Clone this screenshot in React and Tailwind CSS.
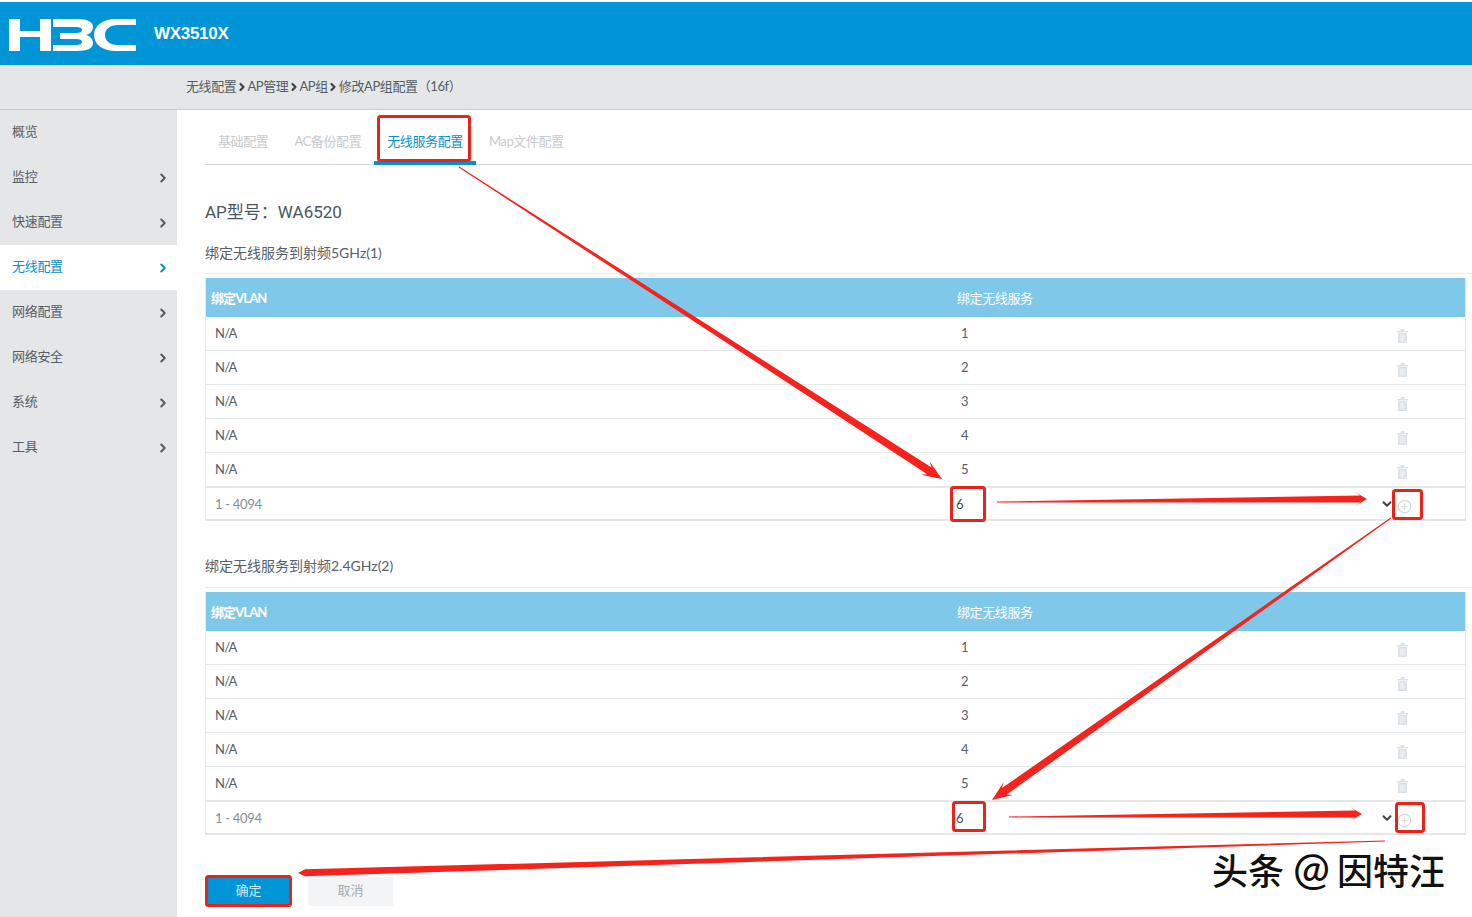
import { ChevronRight, ChevronDown, CirclePlus } from 'lucide-react';

const menu = ['概览', '监控', '快速配置', '无线配置', '网络配置', '网络安全', '系统', '工具'];
const tabs = ['基础配置', 'AC备份配置', '无线服务配置', 'Map文件配置'];
const rows = ['1', '2', '3', '4', '5'];

function Logo() {
  return (
    <svg width="128" height="32" viewBox="0 0 128 32" fill="#fff" className="ml-[9px] mt-[2px]">
      <path d="M0 0h11v12h20V0h11v32H31V18H11v14H0z" />
      <path d="M44 0h24c11 0 16 3 16 8 0 4-3 7-7 8 4 1 7 4 7 8 0 5-5 8-16 8H44v-6h23c4 0 6-1 6-3 0-2-2-3-6-3H51v-6h16c4 0 6-1 6-3 0-2-2-3-6-3H44z" />
      <path d="M127 0h-20C93 0 85 7 85 16s8 16 22 16h20v-6h-18c-8 0-13-4-13-10s5-10 13-10h18z" />
    </svg>
  );
}

function TrashIcon() {
  return (
    <svg width="11" height="14" viewBox="0 0 11 14" className="mt-[4px]" fill="#dde2e7">
      <path d="M0 2h11v1.500H0zM3.500 0h4v2h-4z" />
      <path d="M1 4h9v10H1z" />
      <path d="M3.500 5.500h.8v7h-.8zM5.100 5.500h.8v7h-.8zM6.700 5.500h.8v7h-.8z" fill="#f4f6f8" />
    </svg>
  );
}

function BindTable() {
  return (
    <div className="mr-[6px] border-x border-[#e6e9eb] text-[13px] tracking-[-0.3px] text-[#56606a]">
      <div className="flex h-[39px] items-center bg-[#7fc8ea] pt-[2px] text-white">
        <div className="w-[746px] pl-[5px] font-bold tracking-[-0.9px]">绑定VLAN</div>
        <div className="pl-[5px] tracking-[-0.4px]">绑定无线服务</div>
      </div>
      {rows.map((r) => (
        <div key={r} className="flex h-[34px] items-center border-b border-[#e6e9eb]">
          <div className="w-[746px] pl-[9px] tracking-[-0.8px]">N/A</div>
          <div className="flex-1 pl-[9px]">{r}</div>
          <div className="w-[68px]">
            <TrashIcon />
          </div>
        </div>
      ))}
      <div className="-mt-px flex h-[35px] items-center border-y-2 border-[#e4e6e8]">
        <div className="w-[746px] pl-[9px] pt-[2px] text-[#868e96]">1 - 4094</div>
        <div className="flex-1 pl-[4px] pt-[2px] text-[#444c55]">6</div>
        <ChevronDown size={14} strokeWidth={3.500} className="text-[#3f4650]" />
        <div className="mr-[53px] ml-[3px] mt-[6px]">
          <CirclePlus size={15} strokeWidth={2} className="text-[#d5dadd]" />
        </div>
      </div>
    </div>
  );
}

function Arrow({ from, to, neck = 5, head = 20, spread = 7 }) {
  const dx = to[0] - from[0];
  const dy = to[1] - from[1];
  const len = Math.hypot(dx, dy);
  const ux = dx / len;
  const uy = dy / len;
  const nx = -uy;
  const ny = ux;
  const bx = to[0] - ux * head;
  const by = to[1] - uy * head;
  const innerX = to[0] - ux * (head - 5);
  const innerY = to[1] - uy * (head - 5);
  const pts = [
    [from[0] + nx * 0.5, from[1] + ny * 0.5],
    [innerX + (nx * neck) / 2, innerY + (ny * neck) / 2],
    [bx + nx * spread, by + ny * spread],
    to,
    [bx - nx * spread, by - ny * spread],
    [innerX - (nx * neck) / 2, innerY - (ny * neck) / 2],
    [from[0] - nx * 0.5, from[1] - ny * 0.5],
  ];
  return <polygon points={pts.map((p) => p.join(',')).join(' ')} fill="#f5231c" />;
}

function Annotations() {
  const boxes = [
    [378.5, 116.5, 91, 44],
    [951.5, 487.5, 33, 33],
    [1393.5, 490.5, 28, 28],
    [953.5, 802.5, 31, 28],
    [1396.5, 803.5, 27, 28],
    [206.5, 876.5, 84, 29],
  ];
  return (
    <svg className="pointer-events-none absolute inset-0" width="1472" height="917">
      {boxes.map(([x, y, w, h]) => (
        <rect key={x} x={x} y={y} width={w} height={h} rx="2" fill="none" stroke="#e8231c" strokeWidth="3" />
      ))}
      <Arrow from={[459, 167]} to={[942, 479]} neck={8} head={20} spread={8} />
      <Arrow from={[997, 502]} to={[1367, 499]} neck={7} head={12} spread={7} />
      <Arrow from={[1391, 518]} to={[992, 800]} neck={8} head={20} spread={8} />
      <Arrow from={[1009, 817]} to={[1362, 814]} neck={7} head={12} spread={7} />
      <Arrow from={[1385, 841]} to={[298, 873]} neck={7} head={12} spread={6} />
    </svg>
  );
}

export default function App() {
  return (
    <div className="relative h-[917px] w-[1472px] overflow-hidden bg-white pt-[2px] font-['Lato','Noto_Sans_CJK_SC',sans-serif]">
      <header className="flex h-[63px] items-center bg-[#0095d7]">
        <Logo />
        <span className="ml-[17px] font-['Liberation_Sans',sans-serif] text-[17px] font-bold tracking-[-0.3px] text-white">WX3510X</span>
      </header>

      <div className="flex h-[45px] items-center border-b border-[#c9cccf] bg-[#e4e6e8] pl-[186px] text-[13px] tracking-[-0.4px] text-[#555d66]">
        <span>无线配置</span>
        <ChevronRight size={12} strokeWidth={4.500} className="-mx-[0.5px] text-[#444]" />
        <span>AP管理</span>
        <ChevronRight size={12} strokeWidth={4.500} className="-mx-[0.5px] text-[#444]" />
        <span>AP组</span>
        <ChevronRight size={12} strokeWidth={4.500} className="-mx-[0.5px] text-[#444]" />
        <span>修改AP组配置（16f）</span>
      </div>

      <div className="flex h-[808px]">
        <aside className="w-[177px] shrink-0 bg-[#e4e6e8] text-[13px] tracking-[-0.3px] text-[#56606a]">
          {menu.map((m, i) => {
            const active = m === '无线配置';
            return (
              <div
                key={m}
                className={
                  active
                    ? 'flex h-[45px] items-center justify-between bg-white pr-[7px] pl-[12px] text-[#0a8fc8]'
                    : 'flex h-[45px] items-center justify-between pr-[7px] pl-[12px]'
                }
              >
                <span className="pb-[2px]">{m}</span>
                {i > 0 && <ChevronRight size={14} strokeWidth={3.500} className={active ? 'mt-[1px] text-[#0a8fc8]' : 'mt-[1px] text-[#555d66]'} />}
              </div>
            );
          })}
        </aside>

        <main className="min-w-0 flex-1 pl-[28px]">
          <nav className="flex h-[55px] border-b border-[#d5d8da] text-[13px] tracking-[-0.4px] text-[#c6cacd]">
            {tabs.map((t) => (
              <div
                key={t}
                className={
                  t === '无线服务配置'
                    ? 'flex h-[55px] items-center justify-center border-b-4 border-[#0a8fc8] px-[13px] pt-[12px] text-[#0a8fc8]'
                    : 'flex h-[55px] items-center justify-center px-[13px] pt-[8px]'
                }
              >
                {t}
              </div>
            ))}
          </nav>

          <h2 className="mt-[36px] flex h-[24px] items-center font-['Roboto','Noto_Sans_CJK_SC',sans-serif] text-[17px] text-[#4a5560]">AP型号：WA6520</h2>

          <div className="mt-[17px] flex h-[20px] items-center text-[14px] text-[#56606a]">绑定无线服务到射频5GHz(1)</div>
          <div className="mt-[11px] mb-[4px] border-t border-[#e9ebed]" />
          <BindTable />

          <div className="mt-[34px] flex h-[20px] items-center text-[14px] text-[#56606a]">绑定无线服务到射频2.4GHz(2)</div>
          <div className="mt-[12px] mb-[4px] border-t border-[#e9ebed]" />
          <BindTable />

          <div className="mt-[42px] flex gap-[17px] pl-[1px] text-[13px]">
            <button className="h-[29px] w-[85px] bg-[#0095d7] pb-[2px] text-[#cfeaf7]">确定</button>
            <button className="h-[29px] w-[85px] bg-[#f3f4f5] pb-[2px] text-[#a5abb0]">取消</button>
          </div>
        </main>
      </div>

      <Annotations />

      <div className="absolute top-[846px] left-[1212px] text-[36px] leading-[46px] font-medium whitespace-nowrap text-[#111]">
        头条 <span className="mr-[7px] text-[44px] leading-none">@</span>因特汪
      </div>
    </div>
  );
}
